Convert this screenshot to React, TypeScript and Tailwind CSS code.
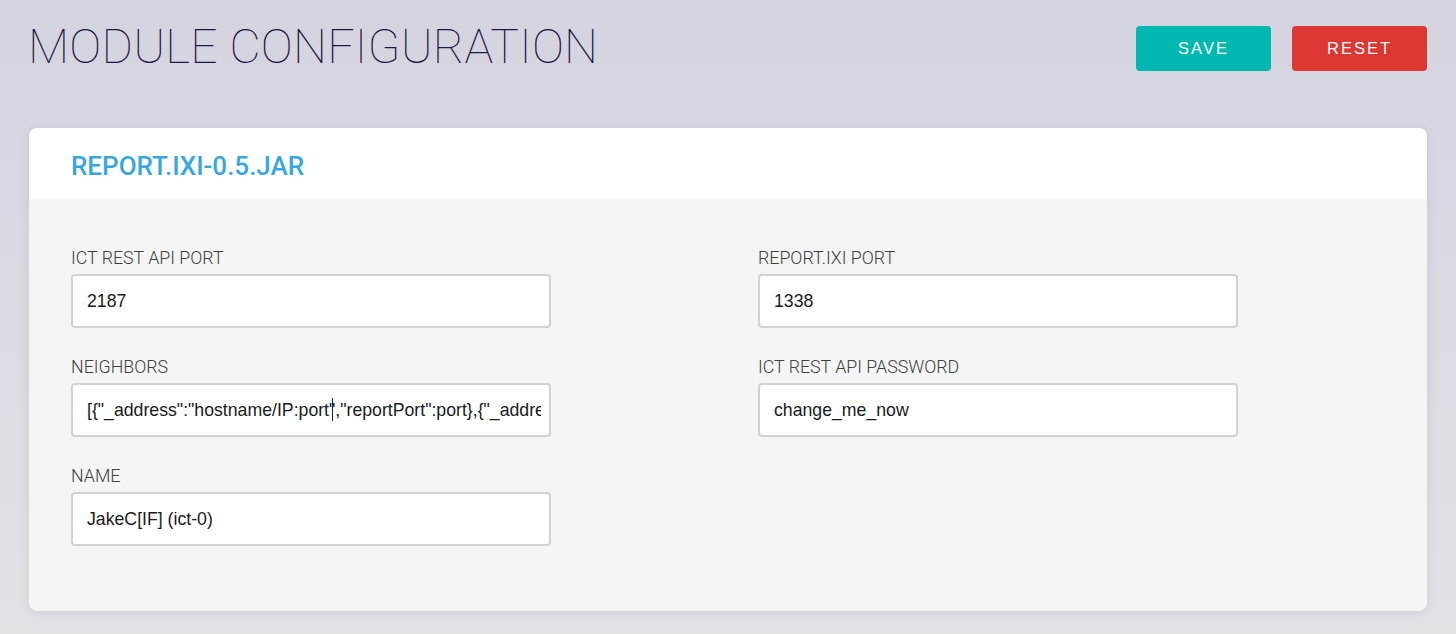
import { FC } from 'react';

interface FieldProps {
    label: string;
    value: string;
    caretAt?: number;
}

const Field: FC<FieldProps> = ({ label, value, caretAt }) => (
    <div className="flex flex-col">
        <label className="h-6 pt-[3px] text-[17.8px] leading-6 text-[#404040] font-['Roboto',sans-serif] font-light">
            {label}
        </label>
        <div className="relative mt-[7px] w-[480px]">
            <input
                readOnly
                value={value}
                className="w-full h-[54px] rounded-[4px] border-2 border-[#d2d2d2] bg-white pl-[14px] pr-2 text-[17.7px] text-[#1a1a1a] font-['Liberation_Sans',Arial,sans-serif] outline-none"
            />
            {caretAt !== undefined && (
                <span
                    className="absolute top-[15px] h-[23px] w-px bg-[#222]"
                    style={{ left: caretAt }}
                />
            )}
        </div>
    </div>
);

export default function App() {
    return (
        <div className="min-h-[634px] bg-gradient-to-b from-[#d4d4e0] to-[#e1e1e6] px-[29px] pt-[26px] pb-[22px] font-['Roboto',sans-serif]">
            <header className="flex items-start justify-between">
                <h1 className="-ml-[1px] mt-[-4px] text-[48px] leading-[50px] font-thin text-[#1f1545] tracking-[0.2px]">
                    MODULE CONFIGURATION
                </h1>
                <div className="flex gap-[21px]">
                    <button className="w-[135px] h-[45px] rounded-[4px] bg-[#00b8b0] text-white text-[16.5px] tracking-[2px] font-['Liberation_Sans',Arial,sans-serif]">
                        SAVE
                    </button>
                    <button className="w-[135px] h-[45px] rounded-[4px] bg-[#dc3733] text-white text-[16.5px] tracking-[2px] font-['Liberation_Sans',Arial,sans-serif]">
                        RESET
                    </button>
                </div>
            </header>

            <section className="mt-[56px] rounded-[8px] overflow-hidden shadow-[0_2px_10px_rgba(80,80,100,0.12)]">
                <div className="h-[71px] bg-white px-[42px] flex items-center">
                    <h2 className="text-[26px] font-medium text-[#39a6e0] pt-[6px]">REPORT.IXI-0.5.JAR</h2>
                </div>
                <div className="bg-gradient-to-b from-[#f4f4f4] to-[#f4f6f5] px-[42px] pt-[44px] pb-[65px]">
                    <div className="grid grid-cols-[687px_1fr] gap-y-6">
                        <Field label="ICT REST API PORT" value="2187" />
                        <Field label="REPORT.IXI PORT" value="1338" />
                        <Field
                            label="NEIGHBORS"
                            value={'[{"_address":"hostname/IP:port","reportPort":port},{"_address":"hostname/IP:port","reportPort":port}]'}
                            caretAt={261}
                        />
                        <Field label="ICT REST API PASSWORD" value="change_me_now" />
                        <Field label="NAME" value="JakeC[IF] (ict-0)" />
                    </div>
                </div>
            </section>
        </div>
    );
}
